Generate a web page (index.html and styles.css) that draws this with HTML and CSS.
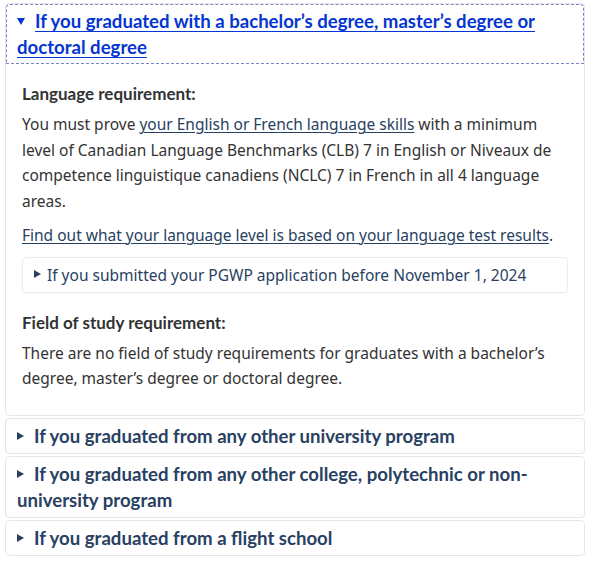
FILE: index.html
```html
<!DOCTYPE html>
<html lang="en">
<head>
<meta charset="utf-8">
<title>PGWP requirements</title>
<link rel="stylesheet" href="styles.css">
</head>
<body>
<main class="page">
  <details class="panel" open>
    <summary class="panel-sum is-open"><span class="arrow down"></span><span class="sum-text">If you graduated with a bachelor’s degree, master’s degree or doctoral degree</span></summary>
    <h3 class="sub">Language requirement:</h3>
    <p class="para">You must prove <a class="link" href="#">your English or French language skills</a> with a minimum level of Canadian Language Benchmarks (CLB) 7 in English or Niveaux de competence linguistique canadiens (NCLC) 7 in French in all 4 language areas.</p>
    <p class="para"><a class="link" href="#">Find out what your language level is based on your language test results</a>.</p>
    <details class="nested">
      <summary class="nested-sum"><span class="arrow right small"></span>If you submitted your PGWP application before November 1, 2024</summary>
    </details>
    <h3 class="sub sub-2">Field of study requirement:</h3>
    <p class="para last">There are no field of study requirements for graduates with a bachelor’s degree, master’s degree or doctoral degree.</p>
  </details>
  <details class="panel">
    <summary class="panel-sum"><span class="arrow right"></span>If you graduated from any other university program</summary>
  </details>
  <details class="panel">
    <summary class="panel-sum"><span class="arrow right"></span>If you graduated from any other college, polytechnic or non-university program</summary>
  </details>
  <details class="panel">
    <summary class="panel-sum"><span class="arrow right"></span>If you graduated from a flight school</summary>
  </details>
</main>
</body>
</html>
```
FILE: styles.css
```css
html, body {
  margin: 0;
  padding: 0;
  background: #ffffff;
}
.page {
  padding: 3px 8px 0 5px;
  font-family: "Noto Sans", "DejaVu Sans", sans-serif;
  color: #333333;
}
.panel {
  border: 1px solid #e6e6e6;
  border-radius: 4px;
  padding: 0 16px;
  margin-bottom: 2px;
}
.panel-sum {
  list-style: none;
  display: block;
  margin: 0 -16px;
  padding: 4px 11px 4px;
  font-family: Lato, "Liberation Sans", sans-serif;
  font-weight: 700;
  font-size: 18.6px;
  line-height: 26px;
  color: #284162;
  cursor: pointer;
}
.panel-sum::-webkit-details-marker { display: none; }
.panel-sum.is-open {
  color: #0535d2;
  outline: 1px dashed #7b86c9;
  outline-offset: -1px;
  border-radius: 4px 4px 0 0;
}
.sum-text {
  text-decoration: underline;
  text-decoration-thickness: 1px;
  text-underline-offset: 3px;
}
.arrow {
  display: inline-block;
  width: 0;
  height: 0;
  margin-right: 10px;
  vertical-align: middle;
  position: relative;
  top: -2px;
}
.arrow.right {
  border-top: 4px solid transparent;
  border-bottom: 4px solid transparent;
  border-left: 7px solid currentColor;
}
.arrow.down {
  border-left: 4px solid transparent;
  border-right: 4px solid transparent;
  border-top: 7px solid currentColor;
}
.arrow.small {
  margin-right: 6px;
  margin-left: 1px;
}
.sub {
  margin: 19px 0 7px;
  font-family: Lato, "Liberation Sans", sans-serif;
  font-weight: 700;
  font-size: 17px;
  line-height: 22px;
  color: #333333;
}
.sub-2 { margin-top: 19px; }
.para {
  margin: 0 0 8px;
  font-size: 15.5px;
  line-height: 25.7px;
}
.para.last { margin-bottom: 23px; }
.link {
  color: #284162;
  text-decoration: underline;
  text-decoration-thickness: 1px;
  text-underline-offset: 2px;
}
.nested {
  border: 1px solid #ececec;
  border-radius: 4px;
  padding: 0 10px;
  box-shadow: 0 1px 2px rgba(0,0,0,0.04);
}
.nested-sum {
  list-style: none;
  display: block;
  padding: 4px 0;
  font-size: 15.5px;
  line-height: 26px;
  color: #284162;
  cursor: pointer;
}
.nested-sum::-webkit-details-marker { display: none; }
```
